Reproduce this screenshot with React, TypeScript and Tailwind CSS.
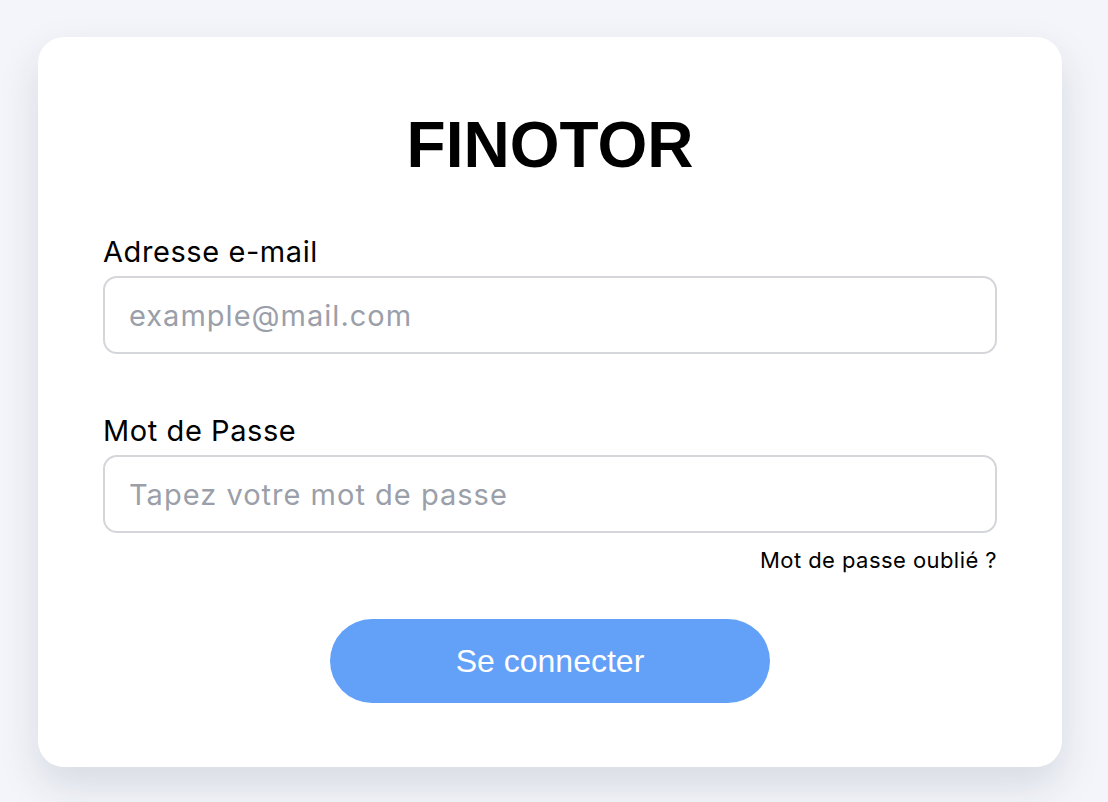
import React from "react";

const labelFont = { fontFamily: "Inter, 'Noto Sans', sans-serif" };

function Field({
  label,
  placeholder,
  type,
}: {
  label: string;
  placeholder: string;
  type: string;
}) {
  return (
    <div className="flex flex-col">
      <label className="text-[29px] leading-[36px] text-black tracking-[0.02em]">
        {label}
      </label>
      <input
        type={type}
        placeholder={placeholder}
        className="mt-[6px] h-[78px] w-full rounded-[14px] border-2 border-[#d4d6da] bg-white px-6 text-[29px] tracking-[0.035em] text-black placeholder:text-[#9a9fa9] outline-none"
      />
    </div>
  );
}

export default function App() {
  return (
    <div className="min-h-[802px] w-full bg-[#f3f5fa] pl-[38px] pt-[37px]" style={labelFont}>
      <div className="flex w-[1024px] flex-col rounded-[26px] bg-white px-[65px] pb-[64px] pt-[76px] shadow-[0_18px_40px_rgba(30,35,60,0.13)]">
        <h1 className="text-center font-['Liberation_Sans',Arial,sans-serif] text-[64px] font-bold leading-[64px] text-black">
          FINOTOR
        </h1>
        <div className="mt-[57px]">
          <Field label="Adresse e-mail" placeholder="example@mail.com" type="email" />
        </div>
        <div className="mt-[59px]">
          <Field label="Mot de Passe" placeholder="Tapez votre mot de passe" type="password" />
        </div>
        <div className="mt-[13px] flex justify-end">
          <a href="#" className="text-[22px] leading-[28px] tracking-[0.02em] text-black">
            Mot de passe oublié ?
          </a>
        </div>
        <div className="mt-[45px] flex justify-center">
          <button className="h-[84px] w-[440px] rounded-full bg-[#63a1f8] font-['Liberation_Sans',Arial,sans-serif] text-[32px] text-white">
            Se connecter
          </button>
        </div>
      </div>
    </div>
  );
}
